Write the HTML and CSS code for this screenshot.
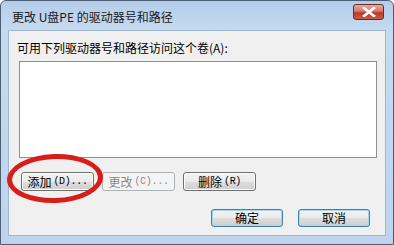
FILE: index.html
```html
<!DOCTYPE html>
<html lang="zh-CN">
<head>
<meta charset="utf-8">
<link rel="stylesheet" href="styles.css">
</head>
<body>
<div class="window">
  <div class="titlebar">
    <span class="title">更改 U盘PE 的驱动器号和路径</span>
    <div class="close">
      <svg width="14" height="10" viewBox="0 0 14 10"><path d="M2 1 L12 9 M12 1 L2 9" stroke="#fff" stroke-width="2.6" stroke-linecap="square"/></svg>
    </div>
  </div>
  <div class="client">
    <div class="label">可用下列驱动器号和路径访问这个卷(A):</div>
    <div class="listbox"></div>
    <div class="row">
      <div class="btn">添加<span class="acc">(D)...</span></div>
      <div class="btn disabled">更改<span class="acc">(C)...</span></div>
      <div class="btn">删除<span class="acc">(R)</span></div>
    </div>
    <div class="row end">
      <div class="btn blue">确定</div>
      <div class="btn blue">取消</div>
    </div>
  </div>
  <div class="ring"></div>
</div>
</body>
</html>
```
FILE: styles.css
```css
html, body {
  margin: 0;
  padding: 0;
  width: 394px;
  height: 245px;
  overflow: hidden;
  background: #fff;
  font-family: "Noto Sans CJK SC", "DejaVu Sans", sans-serif;
  font-size: 12px;
  color: #000;
}
.window {
  position: relative;
  box-sizing: border-box;
  width: 394px;
  height: 245px;
  border: 1px solid #4d5f74;
  border-radius: 6px 6px 0 0;
  background: linear-gradient(180deg, #b4cde9 0px, #c6daef 30px, #bed4ec 100%);
  display: flex;
  flex-direction: column;
  padding: 0 7px 8px 7px;
}
.titlebar {
  height: 29px;
  display: flex;
  align-items: center;
  justify-content: space-between;
}
.title {
  margin-left: 4px;
  font-size: 12px;
  color: #1a1a1a;
  margin-top: 2px;
}
.close {
  width: 31px;
  height: 16px;
  margin-right: 2px;
  margin-top: -7px;
  box-sizing: border-box;
  border: 1px solid #6b2a22;
  border-radius: 3px;
  background: linear-gradient(180deg, #e9a99c 0%, #d4786a 45%, #bb3a2b 55%, #cf5a43 100%);
  display: flex;
  align-items: center;
  justify-content: center;
}
.close svg { display: block; }
.client {
  flex: 1;
  background: #f0f0f0;
  border: 1px solid #9fb6cf;
  padding-top: 10px;
}
.label {
  margin-left: 8px;
  line-height: 14px;
  height: 14px;
}
.listbox {
  margin: 6px 0 0 10px;
  width: 358px;
  height: 97px;
  box-sizing: border-box;
  border: 1px solid #8f8f8f;
  background: #fff;
}
.row {
  display: flex;
  gap: 8px;
  margin-top: 14px;
  padding-left: 12px;
}
.row.end {
  justify-content: flex-end;
  padding-left: 0;
  padding-right: 15px;
  gap: 15px;
  margin-top: 18px;
}
.btn {
  width: 73px;
  height: 19px;
  box-sizing: border-box;
  border: 1px solid #707070;
  border-radius: 3px;
  background: linear-gradient(180deg, #f3f3f3 0%, #ebebeb 50%, #dddddd 51%, #cfcfcf 100%);
  display: flex;
  align-items: center;
  justify-content: center;
  font-size: 12px;
  line-height: 14px;
  box-shadow: inset 0 0 0 1px #fcfcfc;
}
.acc {
  font-family: "Liberation Mono", monospace;
  font-size: 10px;
  margin-left: 2px;
  letter-spacing: -0.3px;
}
.btn.disabled {
  color: #8a8a8a;
  border-color: #adb2b5;
  background: #f4f4f4;
  box-shadow: none;
}
.btn.blue {
  width: 72px;
  height: 18px;
  border-color: #3c7fb1;
  box-shadow: inset 0 0 0 1px #a8d6f5;
  background: linear-gradient(180deg, #f3f3f3 0%, #ebebeb 50%, #dddddd 51%, #cfcfcf 100%);
}
.ring {
  position: absolute;
  left: 6px;
  top: 153px;
  width: 96px;
  height: 49px;
  box-sizing: border-box;
  border: 5px solid #d81e1a;
  border-radius: 50%;
  transform: rotate(-2deg);
}
```
